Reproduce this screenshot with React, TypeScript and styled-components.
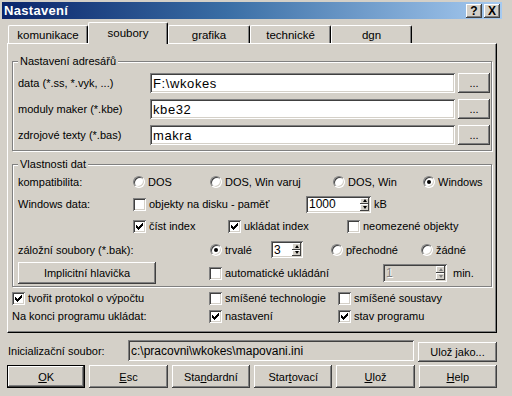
import React from 'react';
import styled, { createGlobalStyle, css } from 'styled-components';

const FACE = '#d4d0c8';

const GlobalStyle = createGlobalStyle`
  html, body {
    margin: 0;
    padding: 0;
    background: ${FACE};
  }
  body {
    font-family: "Liberation Sans", Arial, sans-serif;
    font-size: 11px;
    color: #000;
  }
  * {
    box-sizing: border-box;
  }
`;

const raised = css`
  box-shadow: inset -1px -1px #404040, inset 1px 1px #fff, inset -2px -2px #808080,
    inset 2px 2px ${FACE};
`;

const sunken = css`
  box-shadow: inset 1px 1px #808080, inset -1px -1px #fff, inset 2px 2px #404040,
    inset -2px -2px ${FACE};
`;

const Window = styled.div`
  width: 512px;
  height: 396px;
  padding: 2px 0 0 2px;
  overflow: hidden;
  background: ${FACE};
`;

const TitleBar = styled.div`
  width: 500px;
  height: 17px;
  padding: 0 2px 0 2px;
  display: flex;
  align-items: center;
  justify-content: space-between;
  background: linear-gradient(to right, #0a246a, #3a6ea5 45%, #a6caf0);
`;

const Title = styled.span`
  color: #fff;
  font-weight: bold;
  font-size: 13px;
  letter-spacing: 0.3px;
`;

const TitleButtons = styled.div`
  display: flex;
  gap: 2px;
`;

const TitleButton = styled.div`
  width: 16px;
  height: 14px;
  background: ${FACE};
  ${raised};
  display: flex;
  align-items: center;
  justify-content: center;
  font-weight: bold;
  font-size: 12px;
  line-height: 1;
`;

const Content = styled.div`
  width: 490px;
  margin-left: 5px;
`;

const TabStrip = styled.div`
  display: flex;
  align-items: flex-end;
  height: 21px;
  margin-top: 3px;
  padding-left: 1px;
  position: relative;
  z-index: 1;
`;

const Tab = styled.div<{ $w: number; $active?: boolean }>`
  flex: none;
  width: ${(p) => p.$w}px;
  height: 18px;
  background: ${FACE};
  border-top: 1px solid #fff;
  border-left: 1px solid #fff;
  border-right: 1px solid #000;
  border-radius: 2px 2px 0 0;
  box-shadow: inset -1px 0 #808080;
  display: flex;
  align-items: center;
  justify-content: center;
  padding-top: 1px;
  font-size: 11.5px;
  ${(p) =>
    p.$active &&
    css`
      height: 22px;
      margin-bottom: -1px;
      padding-bottom: 3px;
      position: relative;
      z-index: 2;
    `}
`;

const Panel = styled.div`
  width: 490px;
  height: 290px;
  border-top: 1px solid #fff;
  border-left: 1px solid #fff;
  border-right: 1px solid #000;
  border-bottom: 1px solid #000;
  box-shadow: inset -1px -1px #808080;
  padding: 11px 4px 0 4px;
`;

const Group = styled.fieldset<{ $top?: number; $pad: string }>`
  margin: ${(p) => p.$top ?? 0}px 0 0 0;
  width: 480px;
  padding: ${(p) => p.$pad};
  border: 1px solid #808080;
  box-shadow: inset 1px 1px #fff, 1px 1px #fff;
  min-width: 0;
`;

const Legend = styled.legend`
  padding: 0 2px;
  margin-left: 0;
  line-height: 13px;
  background: ${FACE};
`;

const PathGrid = styled.div`
  display: grid;
  grid-template-columns: 129px 305px 32px;
  grid-auto-rows: 20px;
  column-gap: 3px;
  row-gap: 6px;
  align-items: center;
`;

const Field = styled.div<{ $gray?: boolean }>`
  height: 100%;
  background: ${(p) => (p.$gray ? FACE : '#fff')};
  ${sunken};
  display: flex;
  align-items: center;
  padding: 0 3px;
  font-size: 13px;
  letter-spacing: 0.6px;
  white-space: nowrap;
  overflow: hidden;
`;

const Button = styled.div<{ $default?: boolean; $h?: number }>`
  height: ${(p) => p.$h ?? 20}px;
  background: ${FACE};
  ${raised};
  display: flex;
  align-items: center;
  justify-content: center;
  white-space: nowrap;
  ${(p) =>
    p.$default &&
    css`
      border: 1px solid #000;
    `}
`;

const Row = styled.div<{ $h: number }>`
  display: flex;
  align-items: center;
  height: ${(p) => p.$h}px;
`;

const Cell = styled.div<{ $w?: number }>`
  flex: none;
  ${(p) => (p.$w ? `width: ${p.$w}px;` : '')}
  display: flex;
  align-items: center;
  gap: 3px;
  white-space: nowrap;
`;

const CheckBox = styled.div`
  flex: none;
  width: 13px;
  height: 13px;
  background: #fff;
  ${sunken};
  display: flex;
  align-items: center;
  justify-content: center;
`;

const RadioDot = styled.div`
  flex: none;
  width: 12px;
  height: 12px;
  border-radius: 50%;
  background: #fff;
  border: 1px solid;
  border-color: #808080 #fff #fff #808080;
  box-shadow: inset 1px 1px #404040, inset -1px -1px ${FACE};
  display: flex;
  align-items: center;
  justify-content: center;
`;

const Dot = styled.div`
  width: 4px;
  height: 4px;
  border-radius: 50%;
  background: #000;
`;

const SpinBox = styled.div<{ $w: number; $h: number; $disabled?: boolean }>`
  flex: none;
  width: ${(p) => p.$w}px;
  height: ${(p) => p.$h}px;
  background: ${(p) => (p.$disabled ? FACE : '#fff')};
  ${sunken};
  padding: 2px;
  display: flex;
`;

const SpinValue = styled.div<{ $disabled?: boolean }>`
  flex: 1;
  padding-left: 1px;
  display: flex;
  align-items: center;
  font-size: 12px;
  color: ${(p) => (p.$disabled ? '#808080' : '#000')};
  text-shadow: ${(p) => (p.$disabled ? '1px 1px #fff' : 'none')};
`;

const SpinArrows = styled.div`
  flex: none;
  width: 9px;
  display: flex;
  flex-direction: column;
`;

const SpinHalf = styled.div`
  flex: 1;
  background: ${FACE};
  box-shadow: inset -1px -1px #404040, inset 1px 1px #fff;
  display: flex;
  align-items: center;
  justify-content: center;
`;

const Arrow = styled.div<{ $up?: boolean; $disabled?: boolean }>`
  width: 0;
  height: 0;
  border-left: 2.5px solid transparent;
  border-right: 2.5px solid transparent;
  ${(p) =>
    p.$up
      ? `border-bottom: 3px solid ${p.$disabled ? '#808080' : '#000'};`
      : `border-top: 3px solid ${p.$disabled ? '#808080' : '#000'};`}
`;

const Footer = styled.div`
  margin-top: 7px;
`;

const IniRow = styled.div`
  display: flex;
  align-items: flex-start;
  height: 23px;
`;

const IniLabel = styled.div`
  width: 121px;
  padding-left: 1px;
  height: 21px;
  display: flex;
  align-items: center;
`;

const IniField = styled(Field)`
  width: 286px;
  height: 21px;
  font-size: 12px;
  letter-spacing: 0;
`;

const SaveAs = styled(Button)`
  width: 79px;
  margin-left: 4px;
  margin-top: 2px;
`;

const ButtonBar = styled.div`
  display: grid;
  grid-template-columns: repeat(6, 1fr);
  column-gap: 4px;
  margin-top: 2px;
`;

const Mark = () => (
  <svg width="7" height="7" viewBox="0 0 7 7" shapeRendering="crispEdges">
    <path
      d="M6 0h1v3h-1v1h-1v1h-1v1h-1v1h-1v-1h-1v-1h-1v-3h1v1h1v1h1v-1h1v-1h1z"
      fill="#000"
    />
  </svg>
);

const Check = ({ w, on, children }: { w?: number; on?: boolean; children: React.ReactNode }) => (
  <Cell $w={w}>
    <CheckBox>{on && <Mark />}</CheckBox>
    <span>{children}</span>
  </Cell>
);

const Radio = ({ w, on, children }: { w?: number; on?: boolean; children: React.ReactNode }) => (
  <Cell $w={w}>
    <RadioDot>{on && <Dot />}</RadioDot>
    <span>{children}</span>
  </Cell>
);

const Spin = ({
  w,
  h,
  value,
  disabled,
}: {
  w: number;
  h: number;
  value: string;
  disabled?: boolean;
}) => (
  <SpinBox $w={w} $h={h} $disabled={disabled}>
    <SpinValue $disabled={disabled}>{value}</SpinValue>
    <SpinArrows>
      <SpinHalf>
        <Arrow $up $disabled={disabled} />
      </SpinHalf>
      <SpinHalf>
        <Arrow $disabled={disabled} />
      </SpinHalf>
    </SpinArrows>
  </SpinBox>
);

const tabs = [
  { label: 'komunikace', w: 80 },
  { label: 'soubory', w: 80, active: true },
  { label: 'grafika', w: 82 },
  { label: 'technické', w: 81 },
  { label: 'dgn', w: 81 },
];

const paths = [
  { label: 'data (*.ss, *.vyk, ...)', value: 'F:\\wkokes' },
  { label: 'moduly maker (*.kbe)', value: 'kbe32' },
  { label: 'zdrojové texty (*.bas)', value: 'makra' },
];

export default function App() {
  return (
    <>
      <GlobalStyle />
      <Window>
        <TitleBar>
          <Title>Nastavení</Title>
          <TitleButtons>
            <TitleButton>?</TitleButton>
            <TitleButton>X</TitleButton>
          </TitleButtons>
        </TitleBar>
        <Content>
          <TabStrip>
            {tabs.map((t) => (
              <Tab key={t.label} $w={t.w} $active={t.active}>
                {t.label}
              </Tab>
            ))}
          </TabStrip>
          <Panel>
            <Group $pad="5px 3px 5px 5px">
              <Legend>Nastavení adresářů</Legend>
              <PathGrid>
                {paths.map((p) => (
                  <React.Fragment key={p.label}>
                    <span>{p.label}</span>
                    <Field>{p.value}</Field>
                    <Button>...</Button>
                  </React.Fragment>
                ))}
              </PathGrid>
            </Group>

            <Group $top={7} $pad="0 3px 2px 5px">
              <Legend>Vlastnosti dat</Legend>
              <Row $h={22}>
                <Cell $w={115}>kompatibilita:</Cell>
                <Radio w={77}>DOS</Radio>
                <Radio w={123}>DOS, Win varuj</Radio>
                <Radio w={90}>DOS, Win</Radio>
                <Radio on>Windows</Radio>
              </Row>
              <Row $h={22}>
                <Cell $w={115}>Windows data:</Cell>
                <Check w={173}>objekty na disku - paměť</Check>
                <Cell>
                  <Spin w={65} h={17} value="1000" />
                  <span>kB</span>
                </Cell>
              </Row>
              <Row $h={22}>
                <Cell $w={115} />
                <Check w={95} on>
                  číst index
                </Check>
                <Check w={119} on>
                  ukládat index
                </Check>
                <Check>neomezené objekty</Check>
              </Row>
              <Row $h={25}>
                <Cell $w={192}>záložní soubory (*.bak):</Cell>
                <Radio w={61} on>
                  trvalé
                </Radio>
                <Cell $w={60}>
                  <Spin w={32} h={17} value="3" />
                </Cell>
                <Radio w={90}>přechodné</Radio>
                <Radio>žádné</Radio>
              </Row>
              <Row $h={22}>
                <Cell $w={191}>
                  <Button $h={22} style={{ width: 138 }}>
                    Implicitní hlavička
                  </Button>
                </Cell>
                <Check w={174}>automatické ukládání</Check>
                <Cell>
                  <Spin w={64} h={18} value="1" disabled />
                  <span style={{ marginLeft: 3 }}>min.</span>
                </Cell>
              </Row>
            </Group>

            <Row $h={18} style={{ marginTop: 2 }}>
              <Check w={197} on>
                tvořit protokol o výpočtu
              </Check>
              <Check w={129}>smíšené technologie</Check>
              <Check>smíšené soustavy</Check>
            </Row>
            <Row $h={18}>
              <Cell $w={197}>Na konci programu ukládat:</Cell>
              <Check w={129} on>
                nastavení
              </Check>
              <Check on>stav programu</Check>
            </Row>
          </Panel>

          <Footer>
            <IniRow>
              <IniLabel>Inicializační soubor:</IniLabel>
              <IniField $gray>c:\pracovni\wkokes\mapovani.ini</IniField>
              <SaveAs>
                Ulož&nbsp;<u>j</u>ako...
              </SaveAs>
            </IniRow>
            <ButtonBar>
              <Button $default $h={23}>
                <u>O</u>K
              </Button>
              <Button $h={23}>
                <u>E</u>sc
              </Button>
              <Button $h={23}>
                Sta<u>n</u>dardní
              </Button>
              <Button $h={23}>
                Star<u>t</u>ovací
              </Button>
              <Button $h={23}>
                <u>U</u>lož
              </Button>
              <Button $h={23}>
                <u>H</u>elp
              </Button>
            </ButtonBar>
          </Footer>
        </Content>
      </Window>
    </>
  );
}
